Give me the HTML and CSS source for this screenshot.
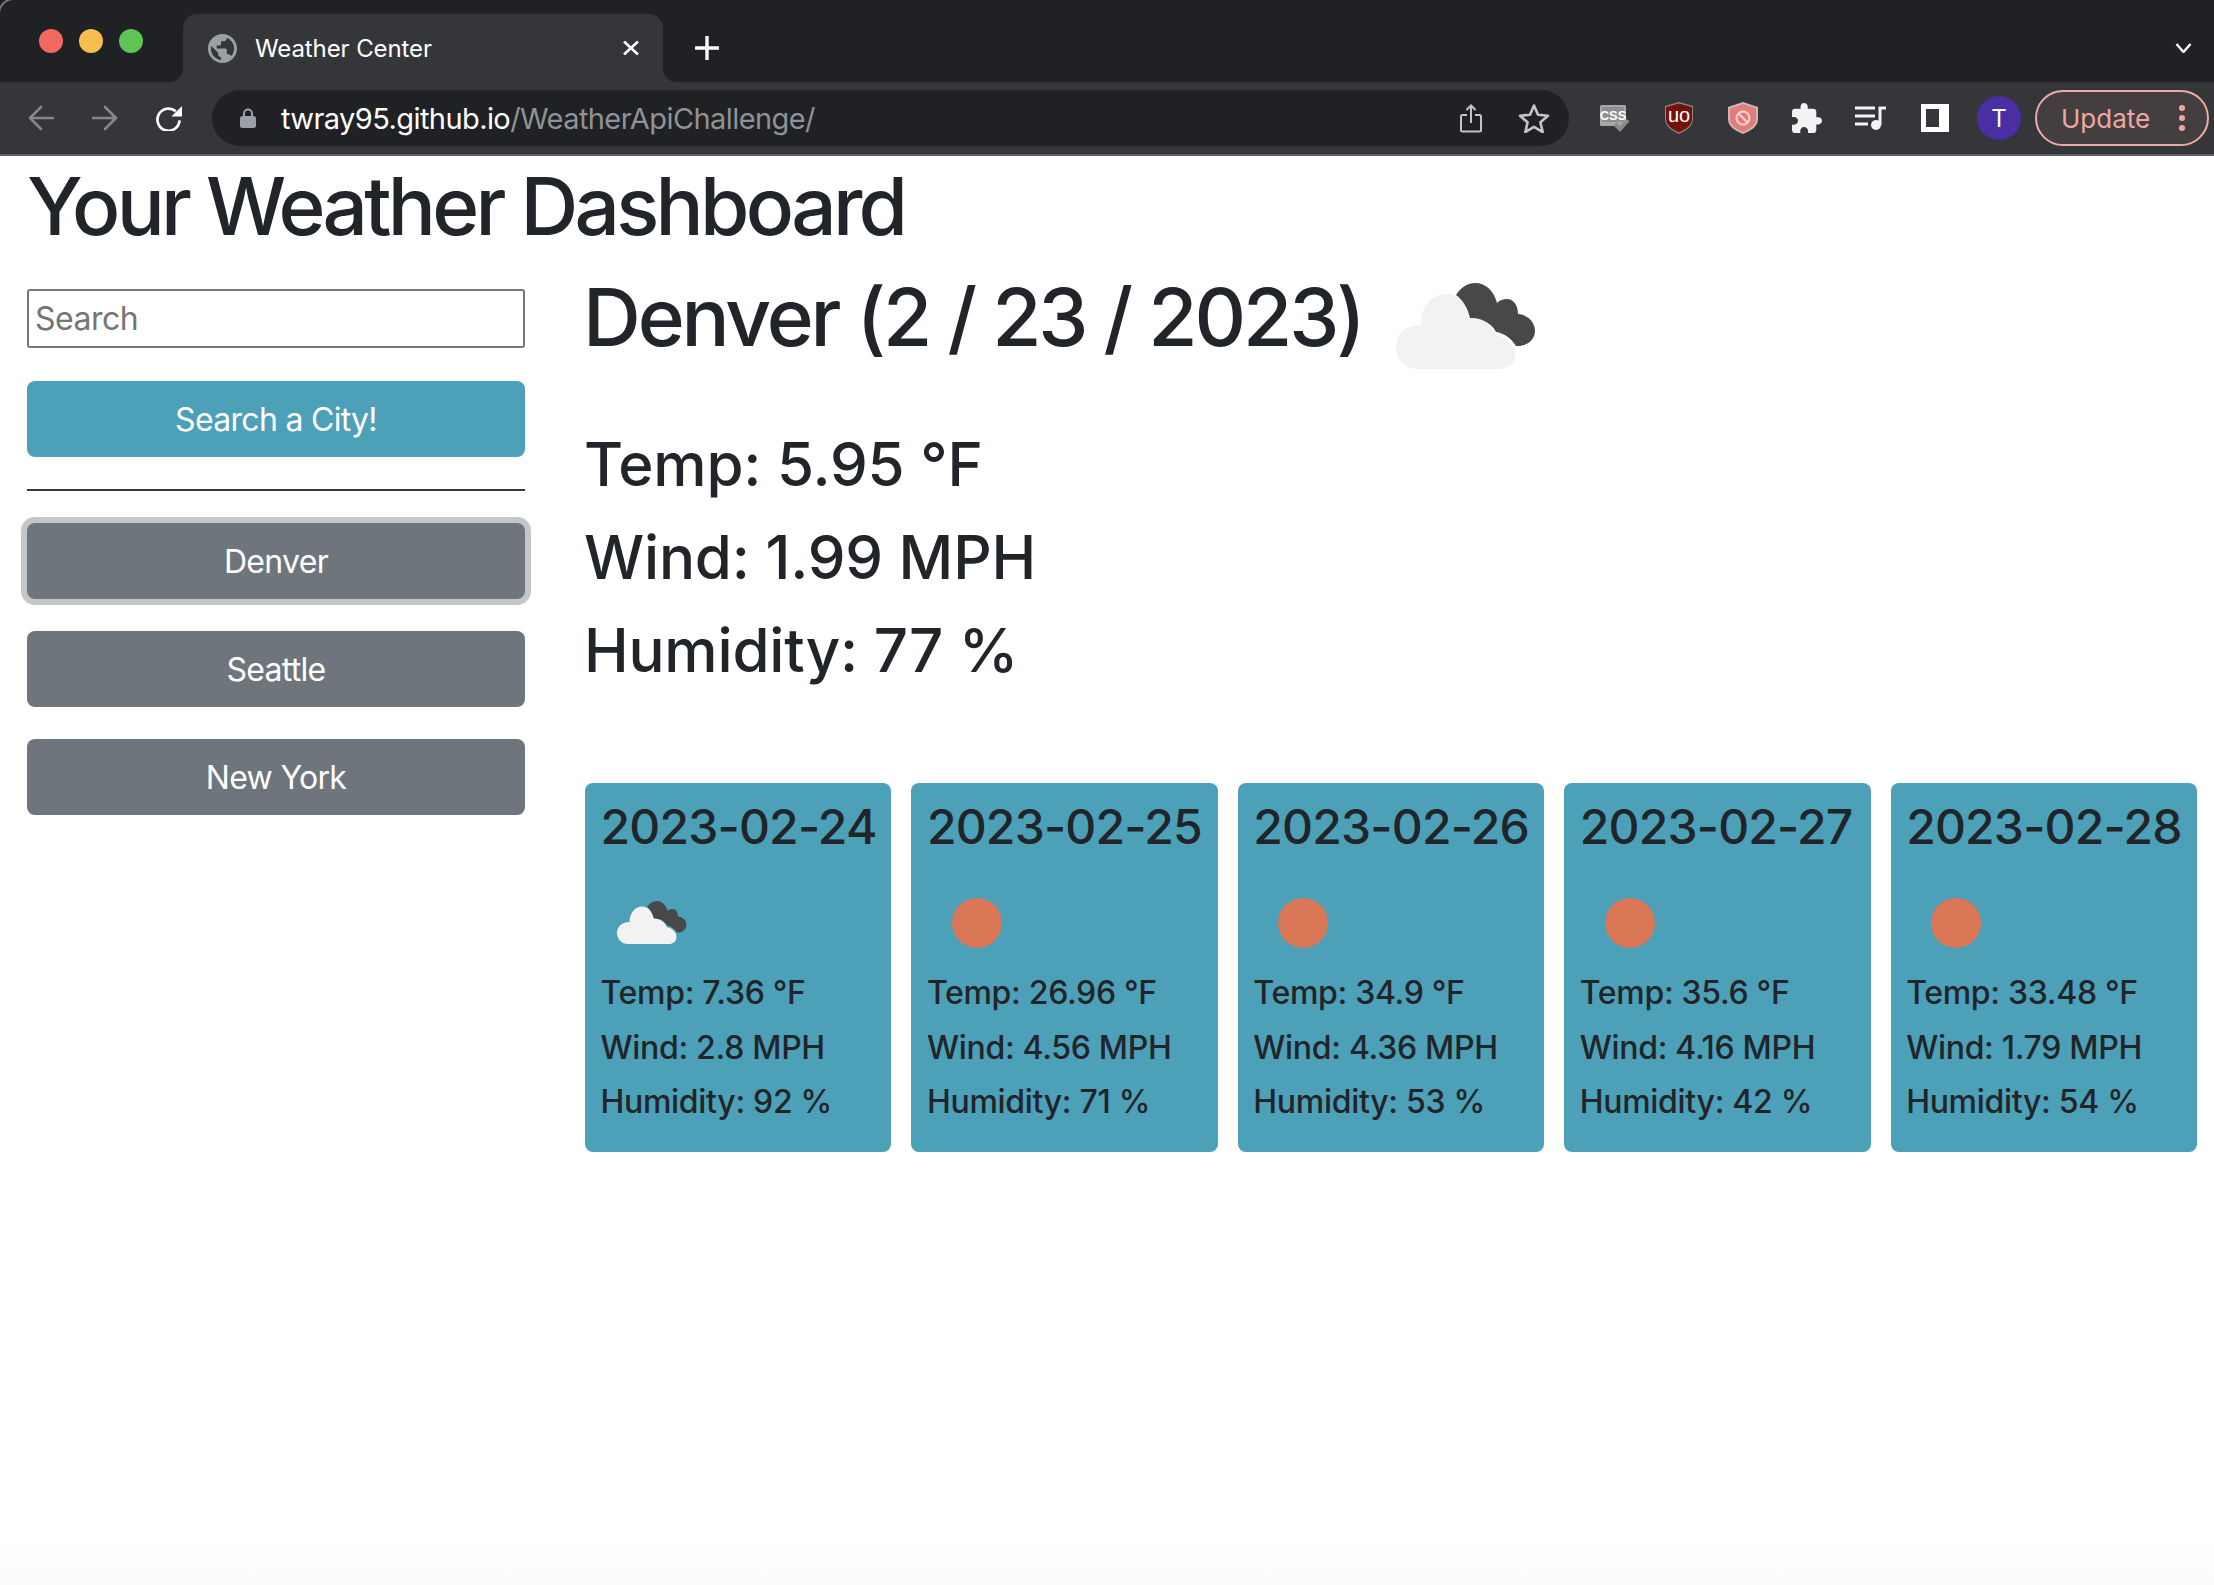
FILE: index.html
```html
<!DOCTYPE html>
<html lang="en">
    <head>
        <title>Weather Center</title>
        <link rel="stylesheet" href="styles.css">
    </head>
    <body>
        <!-- shared icons -->
        <svg class="defs" width="0" height="0">
            <symbol id="cloud" viewBox="0 0 139 86">
                <path fill="#f2f2f2" d="M22 86C9 86 0 76 0 64S9 42 25 42C25 24 36 11 50 11C61 11 69 18 73 34C85 34 96 42 100 52C112 55 119 63 119 72C119 81 112 86 104 86Z"/>
                <path fill="#484848" d="M60 12C65 4 72 0 79 0C90 0 98 8 101 20C104 17 107 16 111 16C118 16 122 23 122 31C132 32 139 39 139 48C139 57 130 64 120 63C116 56 108 50 100 49C97 42 86 34 74 35C72 26 67 17 60 12Z"/>
            </symbol>
        </svg>

        <header class="browser">
            <div class="tabstrip">
                <div class="lights">
                    <span class="light red"></span>
                    <span class="light yellow"></span>
                    <span class="light green"></span>
                </div>
                <div class="tab">
                    <svg class="favicon" viewBox="2 2 20 20"><circle cx="12" cy="12" r="9" fill="#35363a"/><path fill="#9aa0a6" d="M12 2C6.48 2 2 6.48 2 12s4.48 10 10 10 10-4.48 10-10S17.52 2 12 2zm-1 17.93c-3.95-.49-7-3.85-7-7.93 0-.62.08-1.21.21-1.79L9 15v1c0 1.1.9 2 2 2v1.93zm6.9-2.54c-.26-.81-1-1.39-1.9-1.39h-1v-3c0-.55-.45-1-1-1H8v-2h2c.55 0 1-.45 1-1V7h2c1.1 0 2-.9 2-2v-.41c2.93 1.19 5 4.06 5 7.41 0 2.08-.8 3.97-2.1 5.39z"/></svg>
                    <span class="tab-title">Weather Center</span>
                    <svg class="tab-close" viewBox="0 0 16 14"><path d="M1 .5l14 13M15 .5L1 13.500" stroke="#fff" stroke-width="2.6" fill="none"/></svg>
                </div>
                <svg class="new-tab" viewBox="0 0 24 24"><path d="M12 1v22M1 12h22" stroke="#fff" stroke-width="3.4" stroke-linecap="round" fill="none"/></svg>
                <svg class="tab-list" viewBox="0 0 17 10"><path d="M1.5 1l7 8 7-8" stroke="#fff" stroke-width="2.4" fill="none"/></svg>
            </div>
            <div class="toolbar">
                <svg class="nav-icon" viewBox="0 0 26 26"><path d="M25 13H2M13 2L2 13l11 11" stroke="#85878a" stroke-width="2.6" stroke-linecap="round" stroke-linejoin="round" fill="none"/></svg>
                <svg class="nav-icon" viewBox="0 0 26 26"><path d="M1 13h23M13 2l11 11-11 11" stroke="#85878a" stroke-width="2.6" stroke-linecap="round" stroke-linejoin="round" fill="none"/></svg>
                <svg class="nav-icon reload" viewBox="0 0 28 27"><path d="M21 6.5A11.5 11.5 0 1 0 25 16" stroke="#fff" stroke-width="2.8" fill="none"/><path d="M27.5 1v11h-11z" fill="#fff"/></svg>
                <div class="omnibox">
                    <svg class="lock" viewBox="0 0 16 20"><path d="M4 9V5.5a4 4 0 0 1 8 0V9" stroke="#9aa0a6" stroke-width="2" fill="none"/><rect y="8" width="16" height="12" rx="2.5" fill="#9aa0a6"/></svg>
                    <span class="url"><span class="host">twray95.github.io</span>/WeatherApiChallenge/</span>
                    <svg class="share" viewBox="0 0 22 29"><path d="M7 11H2.5A1.5 1.5 0 0 0 1 12.500V26a1.500 1.500 0 0 0 1.500 1.500h17A1.500 1.500 0 0 0 21 26V12.500A1.500 1.500 0 0 0 19.500 11H15M11 19V2M6.500 6L11 1.500 15.500 6" stroke="#c2c4c6" stroke-width="2" fill="none"/></svg>
                    <svg class="star" viewBox="0 0 32 30"><path d="M16 2.500l4 9.300 10 .9-7.600 6.600 2.300 9.800L16 23.900 7.300 29.100l2.300-9.800L2 12.700l10-.9z" stroke="#c2c4c6" stroke-width="2.600" stroke-linejoin="round" fill="none"/></svg>
                </div>
                <div class="extensions">
                    <span class="ext">
                        <svg width="30" height="27" viewBox="0 0 30 27"><rect width="26" height="21" rx="1.500" fill="#a8a8a8"/><rect x="2" y="2" width="22" height="15" fill="#8f8f8f"/><text x="13" y="15" class="css-mark">CSS</text><path d="M15 19l5 5 8-9" stroke="#8b8b8b" stroke-width="4" fill="none"/></svg>
                    </span>
                    <span class="ext">
                        <svg width="28" height="32" viewBox="0 0 28 32"><path d="M14 0l14 4v13c0 8-8 12-14 15C8 29 0 25 0 17V4z" fill="#8a8a8a"/><path d="M14 1.500L27 5v12c0 7-7.500 11-13 13.500C8.500 28 1 24 1 17V5z" fill="#74120a"/><text x="14" y="20" class="ub-mark">uo</text></svg>
                    </span>
                    <span class="ext">
                        <svg width="30" height="32" viewBox="0 0 30 32"><path d="M15 0l15 5v12c0 8-8 12-15 15C8 29 0 25 0 17V5z" fill="#c9b9b9"/><path d="M15 2l13 4.500V17c0 7-7 10.500-13 13C9 27.500 2 24 2 17V6.500z" fill="#e57c7c"/><circle cx="15" cy="16" r="6.500" stroke="#f3d5d5" stroke-width="2" fill="none"/><path d="M10.500 11.500l9 9" stroke="#f3d5d5" stroke-width="2"/></svg>
                    </span>
                    <span class="ext">
                        <svg width="30" height="30" viewBox="2 1 21 21"><path fill="#f1f3f4" d="M20.500 11H19V7c0-1.100-.9-2-2-2h-4V3.500C13 2.120 11.880 1 10.500 1S8 2.120 8 3.500V5H4c-1.100 0-1.990.9-1.990 2v3.800H3.500c1.490 0 2.700 1.210 2.700 2.700s-1.210 2.700-2.700 2.700H2V20c0 1.100.9 2 2 2h3.800v-1.500c0-1.490 1.210-2.700 2.700-2.700 1.490 0 2.700 1.210 2.700 2.700V22H17c1.100 0 2-.9 2-2v-4h1.500c1.380 0 2.500-1.120 2.500-2.500S21.880 11 20.500 11z"/></svg>
                    </span>
                    <span class="ext">
                        <svg width="32" height="24" viewBox="0 0 32 24"><path d="M0 2h20M0 10h20M0 18h13M25 19V2h6" stroke="#f1f3f4" stroke-width="3" fill="none"/><circle cx="21" cy="19" r="5" fill="#f1f3f4"/></svg>
                    </span>
                    <span class="ext"><span class="side-panel"></span></span>
                    <span class="ext"><span class="avatar">T</span></span>
                </div>
                <div class="update">
                    <span>Update</span>
                    <span class="dots"><i></i><i></i><i></i></span>
                </div>
            </div>
        </header>

        <h1 class="title">Your Weather Dashboard</h1>

        <main class="dashboard">
            <aside class="sidebar">
                <input class="search" type="text" placeholder="Search">
                <button class="btn btn-info">Search a City!</button>
                <hr class="rule">
                <button class="btn btn-city focused">Denver</button>
                <button class="btn btn-city">Seattle</button>
                <button class="btn btn-city">New York</button>
            </aside>

            <section class="weather">
                <div class="today">
                    <h2 class="today-title">Denver (2 / 23 / 2023)</h2>
                    <svg class="today-icon"><use href="#cloud"/></svg>
                </div>
                <p class="stat">Temp: 5.95 °F</p>
                <p class="stat">Wind: 1.99 MPH</p>
                <p class="stat">Humidity: 77 %</p>

                <div class="forecast">
                    <article class="card">
                        <h4>2023-02-24</h4>
                        <svg class="card-icon" viewBox="-32 -56 200 186"><use href="#cloud" width="139" height="86"/></svg>
                        <p>Temp: 7.36 °F</p>
                        <p>Wind: 2.8 MPH</p>
                        <p>Humidity: 92 %</p>
                    </article>
                    <article class="card">
                        <h4>2023-02-25</h4>
                        <svg class="card-icon" viewBox="0 0 100 93"><circle cx="50" cy="50" r="25" fill="#d97757"/></svg>
                        <p>Temp: 26.96 °F</p>
                        <p>Wind: 4.56 MPH</p>
                        <p>Humidity: 71 %</p>
                    </article>
                    <article class="card">
                        <h4>2023-02-26</h4>
                        <svg class="card-icon" viewBox="0 0 100 93"><circle cx="50" cy="50" r="25" fill="#d97757"/></svg>
                        <p>Temp: 34.9 °F</p>
                        <p>Wind: 4.36 MPH</p>
                        <p>Humidity: 53 %</p>
                    </article>
                    <article class="card">
                        <h4>2023-02-27</h4>
                        <svg class="card-icon" viewBox="0 0 100 93"><circle cx="50" cy="50" r="25" fill="#d97757"/></svg>
                        <p>Temp: 35.6 °F</p>
                        <p>Wind: 4.16 MPH</p>
                        <p>Humidity: 42 %</p>
                    </article>
                    <article class="card">
                        <h4>2023-02-28</h4>
                        <svg class="card-icon" viewBox="0 0 100 93"><circle cx="50" cy="50" r="25" fill="#d97757"/></svg>
                        <p>Temp: 33.48 °F</p>
                        <p>Wind: 1.79 MPH</p>
                        <p>Humidity: 54 %</p>
                    </article>
                </div>
            </section>
        </main>
    </body>
</html>
```

FILE: styles.css
```css
* {
    box-sizing: border-box;
}

body {
    margin: 0;
    min-height: 100vh;
    font-family: Inter, "Liberation Sans", sans-serif;
    color: #212529;
    background: linear-gradient(to bottom, #fff calc(100% - 50px), #fbfbfb);
}

.defs {
    position: absolute;
}

/* browser chrome */
.browser {
    color: #fff;
}

.tabstrip {
    position: relative;
    display: flex;
    align-items: flex-end;
    height: 82px;
    padding-left: 39px;
    background-color: #202124;
}

.tabstrip::before {
    content: '';
    position: absolute;
    top: -2px;
    left: -2px;
    width: 16px;
    height: 16px;
    border-top: 2px solid #77787a;
    border-left: 2px solid #77787a;
    border-top-left-radius: 16px;
}

.lights {
    display: flex;
    gap: 16px;
    align-self: flex-start;
    margin-top: 29px;
    width: 144px;
}

.light {
    width: 24px;
    height: 24px;
    border-radius: 50%;
}

.red { background-color: #f26a5f; }
.yellow { background-color: #f6bd4f; }
.green { background-color: #5ec454; }

.tab {
    position: relative;
    display: flex;
    align-items: center;
    width: 480px;
    height: 68px;
    padding: 0 24px 0 25px;
    border-radius: 14px 14px 0 0;
    background-color: #35363a;
}

.tab::before,
.tab::after {
    content: '';
    position: absolute;
    bottom: 0;
    width: 14px;
    height: 14px;
}

.tab::before {
    left: -14px;
    background: radial-gradient(circle at 0 0, transparent 14px, #35363a 14.5px);
}

.tab::after {
    right: -14px;
    background: radial-gradient(circle at 100% 0, transparent 14px, #35363a 14.5px);
}

.favicon {
    width: 29px;
    height: 29px;
}

.tab-title {
    margin-left: 18px;
    font-size: 24px;
    letter-spacing: -0.1px;
    flex: 1;
}

.tab-close {
    width: 16px;
    height: 14px;
}

.new-tab {
    align-self: flex-start;
    width: 24px;
    height: 24px;
    margin: 36px 0 0 32px;
}

.tab-list {
    position: absolute;
    top: 43px;
    right: 22px;
    width: 17px;
    height: 10px;
}

.toolbar {
    display: flex;
    align-items: center;
    height: 74px;
    padding-right: 4px;
    background-color: #35363a;
    border-bottom: 2px solid #5f6063;
}

.nav-icon {
    width: 26px;
    height: 26px;
    margin-left: 28px;
}

.nav-icon + .nav-icon {
    margin-left: 38px;
}

.nav-icon.reload {
    width: 28px;
    margin-left: 37px;
}

.omnibox {
    display: flex;
    align-items: center;
    width: 1357px;
    height: 56px;
    margin-left: 29px;
    padding: 0 19px 0 28px;
    border-radius: 28px;
    background-color: #202124;
}

.lock {
    width: 16px;
    height: 20px;
}

.url {
    flex: 1;
    margin-left: 25px;
    font-size: 29px;
    letter-spacing: -0.58px;
    color: #8f9296;
}

.host {
    color: #fff;
}

.share {
    width: 22px;
    height: 29px;
    margin-right: 36px;
}

.star {
    width: 32px;
    height: 30px;
}

.extensions {
    display: flex;
    margin-left: 14px;
}

.ext {
    display: flex;
    align-items: center;
    justify-content: center;
    width: 64px;
    height: 44px;
}

.css-mark {
    font: 700 13px "Liberation Sans", sans-serif;
    fill: #fff;
    text-anchor: middle;
}

.ub-mark {
    font: 400 20px "Liberation Sans", sans-serif;
    fill: #fff;
    text-anchor: middle;
}

.side-panel {
    width: 28px;
    height: 28px;
    border: 5px solid #fff;
    border-right-width: 10px;
    background-color: #35363a;
}

.avatar {
    display: flex;
    align-items: center;
    justify-content: center;
    width: 44px;
    height: 44px;
    border-radius: 50%;
    font-size: 24px;
    background-color: #4a2ea4;
}

.update {
    display: flex;
    align-items: center;
    justify-content: space-between;
    width: 174px;
    height: 56px;
    margin-left: 4px;
    padding: 0 22px 0 24px;
    border: 2px solid #e8ada5;
    border-radius: 28px;
    font-size: 26px;
    color: #eca9a0;
    background-color: #443e41;
}

.dots {
    display: flex;
    flex-direction: column;
    gap: 4px;
}

.dots i {
    width: 6px;
    height: 6px;
    border-radius: 50%;
    background-color: #eca9a0;
}

/* page */
.title {
    margin: 2px 0 15px;
    padding-left: 27px;
    font-size: 80px;
    font-weight: 500;
    line-height: 96px;
    letter-spacing: -3.7px;
}

.dashboard {
    display: flex;
    padding: 0 17px 0 27px;
}

.sidebar {
    display: flex;
    flex-direction: column;
    flex: none;
    width: 498px;
    margin: 20px 60px 0 0;
}

.search {
    height: 59px;
    margin-bottom: 33px;
    padding: 0 6px;
    border: 2px solid #767676;
    border-radius: 3px;
    font: 32px Inter, "Liberation Sans", sans-serif;
    letter-spacing: -0.5px;
}

.search::placeholder {
    color: #757575;
}

.btn {
    height: 76px;
    margin-bottom: 32px;
    border: 0;
    border-radius: 8px;
    font: 32px Inter, "Liberation Sans", sans-serif;
    letter-spacing: -0.7px;
    color: #fff;
}

.btn-info {
    background-color: #4ca0b8;
}

.btn-city {
    background-color: #6f757d;
}

.focused {
    box-shadow: 0 0 0 6px #c4c7ca;
}

.rule {
    width: 100%;
    height: 2px;
    margin: 0 0 32px;
    border: 0;
    background-color: #343a40;
}

.weather {
    flex: 1;
}

.today {
    display: flex;
    align-items: flex-start;
    height: 96px;
}

.today-title {
    margin: 0 0 0 -2px;
    font-size: 80px;
    font-weight: 500;
    line-height: 96px;
    letter-spacing: -3.1px;
}

.today-icon {
    flex: none;
    width: 139px;
    height: 86px;
    margin: 14px 0 0 33px;
}

.stat {
    margin: 0 0 0 -1px;
    font-size: 60px;
    font-weight: 500;
    line-height: 93px;
    letter-spacing: -0.2px;
}

.today + .stat {
    margin-top: 53px;
}

.forecast {
    display: flex;
    gap: 20px;
    margin-top: 86px;
}

.card {
    flex: 1;
    height: 369px;
    padding: 15px 0 0 15.5px;
    border-radius: 8px;
    background-color: #4ca0b8;
}

.card h4 {
    margin: 0 0 17px;
    font-size: 48px;
    font-weight: 500;
    line-height: 58px;
    letter-spacing: -0.8px;
}

.card-icon {
    display: block;
    width: 100px;
    height: 93px;
}

.card p {
    margin: 0;
    font-size: 32px;
    font-weight: 450;
    line-height: 54.6px;
    letter-spacing: -0.3px;
}
```
